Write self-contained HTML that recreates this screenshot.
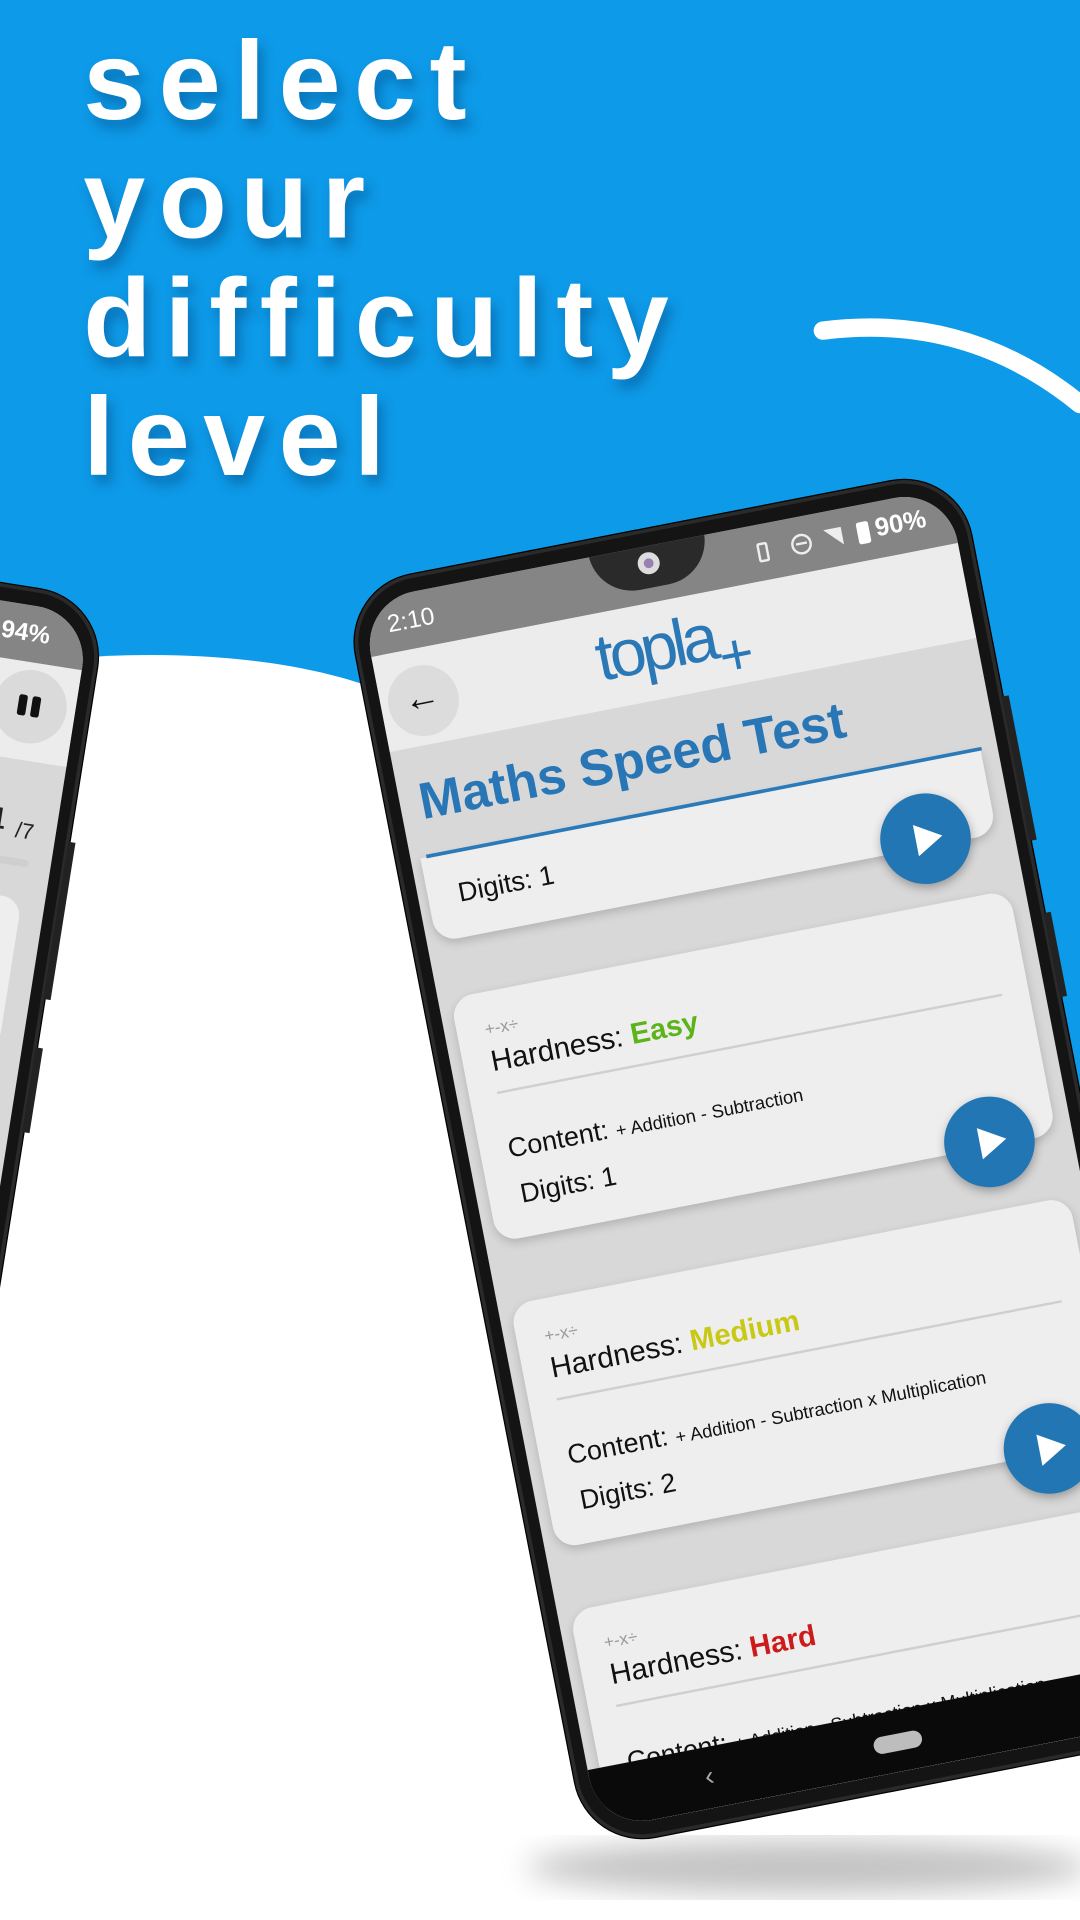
<!DOCTYPE html>
<html><head><meta charset="utf-8"><style>
*{margin:0;padding:0;box-sizing:border-box}
html,body{width:1080px;height:1920px;overflow:hidden;background:#fff}
#wrap{position:absolute;left:0;top:0;width:882px;height:1568px;transform:scale(1.22449);transform-origin:0 0;overflow:hidden;font-family:"Liberation Sans",sans-serif}
.abs{position:absolute}
.head{position:absolute;left:68px;color:#fff;font-weight:bold;font-size:91px;letter-spacing:11px;line-height:97px;top:18px;text-shadow:4px 7px 10px rgba(0,40,90,.35)}
.phone{position:absolute;width:512px;height:1050px;background:#141414;border-radius:56px;box-shadow:0 0 0 3px #2a2a2a inset,0 0 0 1px #000}
.screen{position:absolute;left:12px;top:14px;width:488px;height:1022px;border-radius:44px;overflow:hidden;background:#d8d8d8}
.card{position:absolute;left:10px;width:465px;height:203px;background:#eeeeee;border-radius:18px;box-shadow:0 3px 8px rgba(0,0,0,.18)}
.play{position:absolute;width:74px;height:74px;border-radius:50%;background:#2276b4;box-shadow:0 3px 8px rgba(0,0,0,.3)}
.play:after{content:"";position:absolute;left:29px;top:24px;border-left:22px solid #fff;border-top:13px solid transparent;border-bottom:13px solid transparent}
.t{position:absolute;white-space:nowrap;color:#111}
</style></head><body><div id="wrap">
<svg class="abs" style="left:0;top:0" width="882" height="1568">
<rect width="882" height="1568" fill="#0d9ae8"/>
<path d="M0,545 C100,528 220,532 300,560 L700,700 L882,1000 L882,1568 L0,1568 Z" fill="#fff"/>
<path d="M672,270 Q790,255 882,330" stroke="#fff" stroke-width="15" fill="none" stroke-linecap="round"/>
<ellipse cx="660" cy="1525" rx="230" ry="22" fill="#888" opacity=".5" filter="url(#b)"/>
<defs><filter id="b"><feGaussianBlur stdDeviation="12"/></filter></defs>
</svg>
<div class="head">select<br>your<br>difficulty<br>level</div>

<!-- left phone -->
<div class="phone" style="left:-424px;top:490px;transform-origin:100% 0;transform:rotate(9deg)">
 <div class="screen">
  <div class="abs" style="left:0;top:0;width:488px;height:46px;background:#858585"></div>
  <div class="t" style="right:30px;top:12px;color:#fff;font-size:20px;font-weight:bold">94%</div>
  <div class="abs" style="right:78px;top:14px;width:11px;height:18px;background:#fff;border-radius:2px"></div>
  <div class="abs" style="left:0;top:46px;width:488px;height:80px;background:#ececec"></div>
  <div class="abs" style="left:421px;top:52px;width:60px;height:60px;border-radius:50%;background:#dadada"></div>
  <div class="abs" style="left:441px;top:73px;width:7px;height:17px;background:#111;border-radius:2px"></div>
  <div class="abs" style="left:452px;top:73px;width:7px;height:17px;background:#111;border-radius:2px"></div>
  <div class="t" style="right:18px;top:160px;font-size:32px;color:#222">4 <span style="font-size:18px">/7</span></div>
  <div class="abs" style="left:0;top:206px;width:470px;height:6px;background:#cfcfcf;border-radius:3px"></div>
  <div class="abs" style="left:0;top:238px;width:469px;height:125px;background:#eeeeee;border-radius:16px"></div>
 </div>
 <div class="abs" style="right:-5px;top:200px;width:6px;height:130px;background:#222"></div>
 <div class="abs" style="right:-5px;top:370px;width:6px;height:70px;background:#222"></div>
</div>

<!-- right phone -->
<div class="phone" style="left:280px;top:480px;transform-origin:0 0;transform:rotate(-11deg)">
 <div class="abs" style="right:-5px;top:190px;width:6px;height:120px;background:#222"></div>
 <div class="abs" style="right:-5px;top:370px;width:6px;height:70px;background:#222"></div>
 <div class="screen">
  <div class="abs" style="left:0;top:0;width:488px;height:46px;background:#858585"></div>
  <div class="abs" style="left:190px;top:-2px;width:96px;height:36px;background:#2a2a2a;border-radius:0 0 48px 48px"></div>
  <div class="abs" style="left:228px;top:5px;width:18px;height:18px;border-radius:50%;background:#ddd"></div>
  <div class="abs" style="left:233px;top:10px;width:8px;height:8px;border-radius:50%;background:#9a7fb0"></div>
  <div class="t" style="left:18px;top:12px;color:#fff;font-size:20px">2:10</div>
  <div class="abs" style="left:326px;top:15px;width:9px;height:16px;border:2px solid #eee;border-radius:2px"></div>
  <div class="abs" style="left:354px;top:14px;width:17px;height:17px;border:2px solid #eee;border-radius:50%"></div>
  <div class="abs" style="left:358px;top:21px;width:9px;height:2px;background:#eee"></div>
  <div class="t" style="left:382px;top:10px;color:#eee;font-size:19px">◥</div>
  <div class="abs" style="left:409px;top:14px;width:10px;height:18px;background:#fff;border-radius:2px"></div>
  <div class="t" style="left:424px;top:10px;color:#fff;font-size:21px;font-weight:bold">90%</div>
  <div class="abs" style="left:0;top:46px;width:488px;height:79px;background:#ececec"></div>
  <div class="t" style="left:180px;top:52px;color:#2b78b6;font-size:54px;letter-spacing:-4px">topla<span style="position:relative;top:16px;left:2px;font-size:48px">+</span></div>
  <div class="abs" style="left:6px;top:60px;width:58px;height:58px;border-radius:50%;background:#dcdcdc"></div>
  <div class="t" style="left:19px;top:70px;font-size:30px;font-weight:bold">←</div>

  <div class="abs" style="left:8px;top:215px;width:466px;height:70px;background:#eeeeee;border-radius:0 0 18px 18px;box-shadow:0 3px 8px rgba(0,0,0,.18)"></div>
  <div class="abs" style="left:13px;top:213px;width:462px;height:3px;background:#2a79b8"></div>
  <div class="t" style="left:16px;top:146px;color:#2876b6;font-size:42px;font-weight:bold">Maths Speed Test</div>
  <div class="t" style="left:33px;top:236px;font-size:22px">Digits: 1</div>
  <div class="play" style="left:379px;top:241px"></div>

  <div class="card" style="top:332px">
   <div class="t" style="left:23px;top:22px;color:#999;font-size:14px">+-x÷</div>
   <div class="t" style="left:23px;top:44px;font-size:24px">Hardness: <b style="color:#5cb41a">Easy</b></div>
   <div class="abs" style="left:23px;top:82px;width:420px;height:2px;background:#cfcfcf"></div>
   <div class="t" style="left:23px;top:117px;font-size:22px">Content: <span style="font-size:15px">+ Addition - Subtraction</span></div>
   <div class="t" style="left:26px;top:155px;font-size:22px">Digits: 1</div>
  </div>
  <div class="play" style="left:383px;top:494px"></div>

  <div class="card" style="top:587px">
   <div class="t" style="left:23px;top:22px;color:#999;font-size:14px">+-x÷</div>
   <div class="t" style="left:23px;top:44px;font-size:24px">Hardness: <b style="color:#c9c915">Medium</b></div>
   <div class="abs" style="left:23px;top:82px;width:420px;height:2px;background:#cfcfcf"></div>
   <div class="t" style="left:23px;top:117px;font-size:22px">Content: <span style="font-size:15px">+ Addition - Subtraction x Multiplication</span></div>
   <div class="t" style="left:26px;top:155px;font-size:22px">Digits: 2</div>
  </div>
  <div class="play" style="left:383px;top:749px"></div>

  <div class="card" style="top:842px">
   <div class="t" style="left:23px;top:22px;color:#999;font-size:14px">+-x÷</div>
   <div class="t" style="left:23px;top:44px;font-size:24px">Hardness: <b style="color:#cc1b1b">Hard</b></div>
   <div class="abs" style="left:23px;top:82px;width:420px;height:2px;background:#cfcfcf"></div>
   <div class="t" style="left:23px;top:117px;font-size:22px">Content: <span style="font-size:15px">+ Addition - Subtraction x Multiplication</span></div>
  </div>

  <div class="abs" style="left:0;top:972px;width:488px;height:50px;background:#0a0a0a"></div>
  <div class="t" style="left:93px;top:983px;color:#aaa;font-size:22px">‹</div>
  <div class="abs" style="left:233px;top:991px;width:40px;height:14px;border-radius:7px;background:#bdbdbd"></div>
 </div>
</div>
</div></body></html>
